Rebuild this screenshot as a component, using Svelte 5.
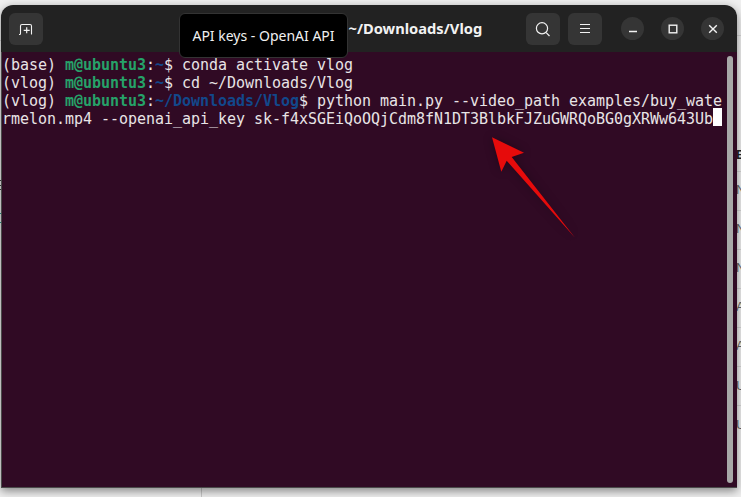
<script>
  const lines = [
    [['(base) '], ['m@ubuntu3', 'g'], [':'], ['~', 'b'], ['$ conda activate vlog']],
    [['(vlog) '], ['m@ubuntu3', 'g'], [':'], ['~', 'b'], ['$ cd ~/Downloads/Vlog']],
    [['(vlog) '], ['m@ubuntu3', 'g'], [':'], ['~/Downloads/Vlog', 'b'], ['$ python main.py --video_path examples/buy_wate']],
    [['rmelon.mp4 --openai_api_key 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']]
  ];
  const behind = [
    { y: 147, t: 'E', c: 'strong' },
    { y: 182, t: 'N', c: '' },
    { y: 221, t: 'N', c: '' },
    { y: 260, t: 'N', c: '' },
    { y: 299, t: 'A', c: '' },
    { y: 338, t: 'A', c: '' },
    { y: 378, t: 'U', c: '' },
    { y: 417, t: 'U', c: '' }
  ];
</script>

<div class="desktop">
  <div class="backdrop">
    {#each behind as b}
      <span class="edge {b.c}" style="top: {b.y}px">{b.t}</span>
    {/each}
    {#each [35, 171, 210, 249, 288, 327, 366, 405] as y}
      <span class="rule" style="top: {y}px"></span>
    {/each}
    <span class="rule left" style="top: 40px"></span>
    <span class="mark dark" style="top: 180px"></span>
    <span class="mark dark" style="top: 185px"></span>
    <span class="mark dark" style="top: 189px"></span>
    <span class="mark teal" style="top: 213px"></span>
    <span class="mark teal" style="top: 222px"></span>
    <span class="vrule"></span>
  </div>

  <section class="window">
    <header class="titlebar">
      <div class="side">
        <button class="tool" aria-label="New tab">
          <svg width="16" height="16" viewBox="0 0 16 16" fill="none" stroke="#f2f2f2" stroke-width="1.1">
            <path d="M1 13.5h.7c.6 0 .8-.4.8-1V5q0-1.5 1.5-1.5h8q1.5 0 1.5 1.5v8.5" />
            <path d="M8.7 6.3v6M5.7 9.3h6" stroke-width="1.2" />
          </svg>
        </button>
      </div>
      <h1 class="title"><span class="dim">m@ubuntu3:</span> ~/Downloads/Vlog</h1>
      <div class="side end">
        <div class="actions">
          <button class="tool" aria-label="Search">
            <svg width="16" height="16" viewBox="0 0 16 16" fill="none" stroke="#f2f2f2" stroke-width="1.2">
              <circle cx="7" cy="7.3" r="5.6" />
              <path d="M11.2 11.6l3.3 3.4" />
            </svg>
          </button>
          <button class="tool" aria-label="Menu">
            <svg width="16" height="16" viewBox="0 0 16 16" fill="none" stroke="#f2f2f2" stroke-width="1">
              <path d="M3 3.5h10M3 7.5h10M3 11.5h10" />
            </svg>
          </button>
        </div>
        <div class="controls">
          <button class="round" aria-label="Minimize">
            <svg width="12" height="12" viewBox="0 0 12 12" fill="none" stroke="#f2f2f2" stroke-width="1.4"><path d="M2 8.5h8" /></svg>
          </button>
          <button class="round" aria-label="Maximize">
            <svg width="12" height="12" viewBox="0 0 12 12" fill="none" stroke="#f2f2f2" stroke-width="1.4"><rect x="2.2" y="2.2" width="7.6" height="7.6" /></svg>
          </button>
          <button class="round" aria-label="Close">
            <svg width="12" height="12" viewBox="0 0 12 12" fill="none" stroke="#f2f2f2" stroke-width="1.4"><path d="M2.2 2.2l7.6 7.6M9.8 2.2l-7.6 7.6" /></svg>
          </button>
        </div>
      </div>
    </header>

    <div class="terminal">
      <pre class="output">{#each lines as line}<div class="line">{#each line as part}<span class={part[1] || ''}>{part[0]}</span>{/each}{#if line === lines[3]}<span class="cursor"></span>{/if}</div>{/each}</pre>
      <div class="scrollbar"></div>
    </div>
  </section>

  <div class="tooltip">API keys - OpenAI API</div>

  <svg class="arrow" width="100" height="110" viewBox="0 0 100 110" aria-hidden="true">
    <path d="M0 .3 L32 15.7 L19.7 20 L83 100.7 L14.7 23.7 L9.3 34.7 Z" fill="#e60b0b" />
  </svg>
</div>

<style>
  :global(body) {
    margin: 0;
    background: #ececec;
  }
  .desktop {
    position: relative;
    width: 741px;
    height: 497px;
    overflow: hidden;
    background: #efefef;
  }
  .rule {
    position: absolute;
    right: 0;
    width: 5px;
    height: 1px;
    background: #d6d6d6;
  }
  .rule.left {
    left: 0;
    right: auto;
    width: 2px;
  }
  .mark {
    position: absolute;
    left: 0;
    width: 2px;
    height: 1px;
  }
  .mark.dark {
    background: #444;
  }
  .mark.teal {
    background: #2a9d8f;
  }
  .edge {
    position: absolute;
    left: 736px;
    font: 13px/16px "Liberation Sans", sans-serif;
    color: #666;
  }
  .edge.strong {
    font-weight: 700;
    color: #222;
  }
  .vrule {
    position: absolute;
    left: 201px;
    top: 486px;
    width: 1px;
    height: 11px;
    background: #c8c8c8;
  }
  .window {
    position: absolute;
    left: 1px;
    top: 5px;
    width: 736px;
    height: 483px;
    display: flex;
    flex-direction: column;
    border-radius: 12px 12px 0 0;
    overflow: hidden;
    box-shadow: 0 3px 10px rgba(0, 0, 0, 0.45);
  }
  .titlebar {
    flex: 0 0 47px;
    display: grid;
    grid-template-columns: 1fr auto 1fr;
    align-items: center;
    padding: 0 13px 0 8px;
    background: #222222;
  }
  .side {
    display: flex;
    align-items: center;
  }
  .side.end {
    justify-content: flex-end;
  }
  button {
    padding: 0;
    border: 0;
    display: flex;
    align-items: center;
    justify-content: center;
    background: #353535;
    color: #f2f2f2;
  }
  .tool {
    width: 34px;
    height: 32px;
    border-radius: 6px;
  }
  .title {
    margin: 0 0 2px;
    font: 700 14.7px "Noto Sans", sans-serif;
    color: #f2f2f2;
    white-space: pre;
  }
  .dim {
    color: #555;
  }
  .actions {
    display: flex;
    gap: 8px;
    margin-right: 19px;
  }
  .controls {
    display: flex;
    gap: 17px;
  }
  .round {
    width: 23px;
    height: 23px;
    border-radius: 50%;
  }
  .terminal {
    position: relative;
    flex: 1;
    background: #300a24;
    border: solid #4a4a4a;
    border-width: 0 0 1px 1px;
  }
  .output {
    margin: 3.5px 0 0;
    font: 15px/18.3px "DejaVu Sans Mono", monospace;
    letter-spacing: -0.03px;
    color: #e8e4e6;
  }
  .line {
    height: 18.3px;
  }
  .g {
    color: #26a269;
    font-weight: 700;
  }
  .b {
    color: #12488b;
    font-weight: 700;
  }
  .cursor {
    display: inline-block;
    width: 9px;
    height: 18px;
    vertical-align: top;
    margin-top: -2px;
    background: #fff;
  }
  .scrollbar {
    position: absolute;
    right: 4px;
    top: 4px;
    bottom: 4px;
    width: 6px;
    border-radius: 3px;
    background: #a8a8a8;
  }
  .tooltip {
    position: absolute;
    left: 179px;
    top: 13px;
    width: 169px;
    height: 45px;
    display: flex;
    align-items: center;
    justify-content: center;
    box-sizing: border-box;
    border: 1px solid #333;
    border-radius: 6px;
    background: #000;
    color: #f0f0f0;
    font: 14px "Noto Sans", sans-serif;
  }
  .arrow {
    position: absolute;
    left: 492px;
    top: 137px;
    filter: drop-shadow(0 0 5px rgba(0, 0, 0, 0.35));
  }
</style>
